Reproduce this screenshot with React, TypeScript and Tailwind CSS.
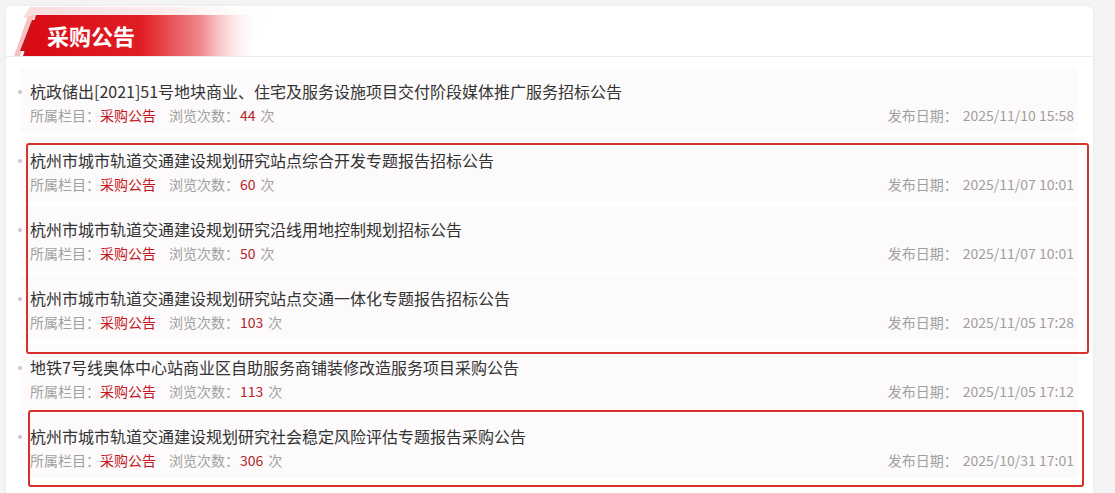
import React from "react";

const items = [
  { title: "杭政储出[2021]51号地块商业、住宅及服务设施项目交付阶段媒体推广服务招标公告", views: 44, date: "2025/11/10 15:58" },
  { title: "杭州市城市轨道交通建设规划研究站点综合开发专题报告招标公告", views: 60, date: "2025/11/07 10:01" },
  { title: "杭州市城市轨道交通建设规划研究沿线用地控制规划招标公告", views: 50, date: "2025/11/07 10:01" },
  { title: "杭州市城市轨道交通建设规划研究站点交通一体化专题报告招标公告", views: 103, date: "2025/11/05 17:28" },
  { title: "地铁7号线奥体中心站商业区自助服务商铺装修改造服务项目采购公告", views: 113, date: "2025/11/05 17:12" },
  { title: "杭州市城市轨道交通建设规划研究社会稳定风险评估专题报告采购公告", views: 306, date: "2025/10/31 17:01" },
];

function HeaderDeco() {
  return (
    <svg className="absolute left-0 top-0" width="300" height="52" viewBox="0 0 300 52">
      <defs>
        <linearGradient id="tab" x1="0" y1="0" x2="1" y2="0">
          <stop offset="0" stopColor="#d80a14" />
          <stop offset="0.5" stopColor="#e01e26" />
          <stop offset="0.75" stopColor="#f08a8d" />
          <stop offset="1" stopColor="#ffffff" stopOpacity="0" />
        </linearGradient>
        <linearGradient id="bg" x1="0" y1="0" x2="1" y2="0">
          <stop offset="0" stopColor="#fbd3d4" />
          <stop offset="0.6" stopColor="#fde9e9" />
          <stop offset="1" stopColor="#ffffff" stopOpacity="0" />
        </linearGradient>
      </defs>
      <polygon points="24,1 270,1 262,12 17,12" fill="url(#bg)" opacity="0.8" />
      <polygon points="8,50 22,10 28,10 14,50" fill="#f6c2c4" />
      <polygon points="14,45 26,14 31,14 19,45" fill="#c8121b" />
      <polygon points="30,9 255,9 245,50 17,50" fill="url(#tab)" />
    </svg>
  );
}

export default function App() {
  return (
    <div
      className="min-h-[493px] w-[1115px] bg-[#f4f4f4] pl-[6px] pt-[6px]"
      style={{ fontFamily: '"Noto Sans CJK SC", "Noto Sans", sans-serif' }}
    >
      <div className="relative w-[1087px] h-[487px] overflow-hidden rounded-t-[6px] bg-white shadow-[0_0_4px_rgba(0,0,0,0.06)]">
        <div className="relative h-[51px] border-b border-[#ececec]">
          <HeaderDeco />
          <div className="absolute left-[41px] top-[13px] text-[22px] font-bold leading-[32px] text-white">
            采购公告
          </div>
        </div>
        <div className="pt-[11px] pl-[14px] pr-[15px]">
          {items.map((it, i) => (
            <div key={i} className="relative mb-[4px] h-[65px] rounded-[4px] bg-[#fcfafa] pl-[10px] pr-[4px] pt-[12px]">
              <span className="absolute left-[-2px] top-[22px] h-[4px] w-[4px] rounded-full bg-[#c8c8c8]" />
              <div className="text-[16px] leading-[22px] text-[#333] whitespace-nowrap">{it.title}</div>
              <div className="mt-[3px] flex items-center text-[14px] leading-[20px] text-[#a0a0a0]">
                <span>所属栏目：</span>
                <span className="text-[#c4161c]">采购公告</span>
                <span className="ml-[13px]">浏览次数：</span>
                <span className="ml-[1px] text-[#b3262b]">{it.views}</span>
                <span className="ml-[5px]">次</span>
                <span className="ml-auto">发布日期：</span>
                <span className="ml-[5px]">{it.date}</span>
              </div>
            </div>
          ))}
        </div>
        <div className="pointer-events-none absolute left-[20px] top-[137px] h-[211px] w-[1063px] rounded-[3px] border-[2.5px] border-[#d8302b]" />
        <div className="pointer-events-none absolute left-[22px] top-[404px] h-[77px] w-[1056px] rounded-[3px] border-[2.5px] border-[#d8302b]" />
      </div>
    </div>
  );
}
